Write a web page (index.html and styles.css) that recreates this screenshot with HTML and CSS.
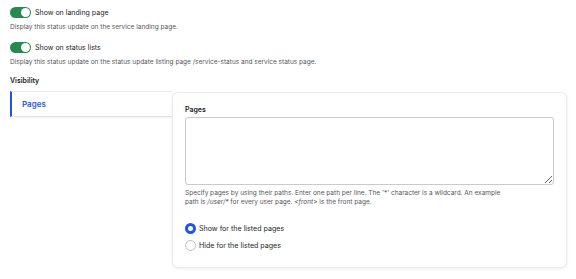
FILE: index.html
```html
<html>
<head>
    <title>Status update settings</title>
    <link rel="stylesheet" href="styles.css">
</head>
<body>
<main class="page">
    <div class="form-item">
        <label class="toggle-row">
            <span class="toggle"><span class="toggle-knob"></span></span>
            <span class="toggle-label">Show on landing page</span>
        </label>
        <div class="description">Display this status update on the service landing page.</div>
    </div>
    <div class="form-item">
        <label class="toggle-row">
            <span class="toggle"><span class="toggle-knob"></span></span>
            <span class="toggle-label">Show on status lists</span>
        </label>
        <div class="description">Display this status update on the status update listing page /service-status and service status page.</div>
    </div>
    <h3 class="section-title">Visibility</h3>
    <div class="vertical-tabs">
        <ul class="tabs-list">
            <li class="tabs-list-item is-selected">
                <a href="#" class="tab-link">Pages</a>
            </li>
        </ul>
        <div class="tab-pane">
            <label class="field-label" for="pages">Pages</label>
            <textarea class="field-textarea" id="pages"></textarea>
            <div class="field-help">
                <span class="help-line">Specify pages by using their paths. Enter one path per line. The '*' character is a wildcard. An example</span>
                <span class="help-line">path is <em>/user/*</em> for every user page. <em>&lt;front&gt;</em> is the front page.</span>
            </div>
            <div class="radios">
                <label class="radio-row">
                    <span class="radio is-checked"></span>
                    <span class="radio-label">Show for the listed pages</span>
                </label>
                <label class="radio-row">
                    <span class="radio"></span>
                    <span class="radio-label">Hide for the listed pages</span>
                </label>
            </div>
        </div>
    </div>
</main>
</body>
</html>
```

FILE: styles.css
```css
body {
    margin: 0;
    font-family: Inter, "Liberation Sans", sans-serif;
    color: #232429;
    background: #fff;
}

.page {
    padding: 6px 9px 0 10px;
}

.form-item {
    margin-bottom: 9.5px;
}

.toggle-row {
    display: flex;
    align-items: center;
    gap: 4px;
    height: 12px;
}

.toggle {
    width: 21px;
    height: 11px;
    border-radius: 6px;
    background-color: #258a4f;
    display: flex;
    align-items: center;
    justify-content: flex-end;
    padding: 0 1px;
    box-sizing: border-box;
}

.toggle-knob {
    width: 9px;
    height: 9px;
    border-radius: 50%;
    background-color: #fff;
}

.toggle-label {
    font-size: 7px;
}

.description {
    margin-top: 4.5px;
    font-size: 6.5px;
    line-height: 9px;
    color: #55565b;
}

.section-title {
    margin: 2px 0 5px;
    font-size: 7px;
    font-weight: 600;
    line-height: 10px;
}

.vertical-tabs {
    display: flex;
    align-items: flex-start;
}

.tabs-list {
    margin: 0;
    padding: 0;
    list-style: none;
    width: 162px;
    flex-shrink: 0;
}

.tabs-list-item {
    height: 24px;
    border-top: 1px solid #ebebee;
    border-bottom: 1px solid #e3e3e6;
    border-left: 2px solid #1f56e8;
    display: flex;
    align-items: center;
    box-shadow: 0 1px 2px rgba(0,0,0, .05);
}

.tab-link {
    padding-left: 10px;
    font-size: 8px;
    font-weight: 600;
    color: #1f56e8;
    text-decoration: none;
}

.tab-pane {
    flex: 1;
    margin-top: 1px;
    padding: 12px 12px 16px;
    border: 1px solid #ececef;
    border-radius: 6px;
    box-shadow: 0 1px 3px rgba(0,0,0, .08);
    background-color: #fff;
}

.field-label {
    display: block;
    font-size: 7px;
    font-weight: 600;
    line-height: 9px;
    margin-bottom: 3px;
}

.field-textarea {
    display: block;
    width: 100%;
    height: 68px;
    box-sizing: border-box;
    border: 1px solid #c9c9ce;
    border-radius: 3px;
    resize: vertical;
    margin: 0;
}

.field-help {
    margin-top: 3.5px;
    font-size: 6.5px;
    line-height: 9px;
    color: #55565b;
}

.help-line {
    display: block;
}

.radios {
    margin-top: 16px;
}

.radio-row {
    display: flex;
    align-items: center;
    gap: 3px;
    height: 11px;
    margin-bottom: 6px;
}

.radio-row:last-child {
    margin-bottom: 0;
}

.radio {
    width: 11px;
    height: 11px;
    border-radius: 50%;
    border: 1px solid #bfbfc4;
    box-sizing: border-box;
    background-color: #fff;
}

.radio.is-checked {
    border: 3px solid #1f56e8;
}

.radio-label {
    font-size: 7.1px;
}
```
